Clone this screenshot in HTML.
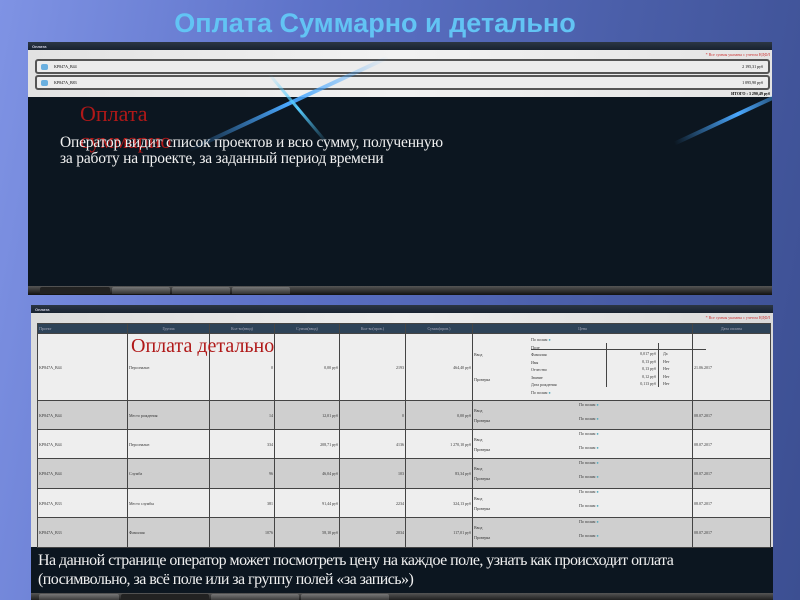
<!DOCTYPE html>
<html><head><meta charset="utf-8"><style>
*{margin:0;padding:0;box-sizing:border-box}
body{width:800px;height:600px;overflow:hidden;position:relative;background:linear-gradient(100deg,#7f93e4 0%,#5d72c8 35%,#4a5ea8 70%,#3c4f92 100%);font-family:"Liberation Serif",serif}
.a{position:absolute}
h1{position:absolute;left:0;width:750px;top:8px;text-align:center;font:bold 27px "Liberation Sans",sans-serif;color:#62c4f4;letter-spacing:0}
.tb{background:linear-gradient(#2b3644,#182230);color:#ccd;font:bold 4px "Liberation Sans";padding:2px 4px}
.tabs{background:linear-gradient(#555,#111);}
.tab{position:absolute;top:1px;height:7px;background:linear-gradient(#777,#333);border-radius:2px 2px 0 0}
table{border-collapse:collapse;font-size:4px;color:#333;font-family:"Liberation Serif",serif}
td,th{border:1px solid #444;padding:1px}
th{background:#2e4358;color:#aab;font-weight:normal;height:10px}
.pp{position:absolute;left:548px;font-size:4px;color:#333}
.pp span{color:#5ab}
</style></head><body>
<h1>Оплата Суммарно и детально</h1>

<div class="a" style="left:28px;top:42px;width:744px;height:253px;background:#0c1620;overflow:hidden">
 <div class="tb" style="height:8px">Оплата</div>
 <div class="a" style="left:0;top:8px;width:744px;height:47px;background:linear-gradient(90deg,#e2e2e2,#f2f2f2 50%,#e4e4e4)"></div>
 <div class="a" style="right:2px;top:10px;font-size:4px;color:#c33">* Все суммы указаны с учетом НДФЛ</div>
 <div class="a" style="left:7px;top:17px;width:735px;height:15px;border:2px solid #555;border-radius:3px;background:#ececec"><span class="a" style="left:4px;top:3px;width:7px;height:6px;background:#6ab0e0;border-radius:2px"></span><span class="a" style="left:17px;top:3px;font-size:4px">KP847A_B44</span><span class="a" style="right:5px;top:3px;font-size:4px">2 195,31 руб</span></div>
 <div class="a" style="left:7px;top:33px;width:735px;height:15px;border:2px solid #555;border-radius:3px;background:#ececec"><span class="a" style="left:4px;top:3px;width:7px;height:6px;background:#6ab0e0;border-radius:2px"></span><span class="a" style="left:17px;top:3px;font-size:4px">KP847A_B83</span><span class="a" style="right:5px;top:3px;font-size:4px">1 095,90 руб</span></div>
 <div class="a" style="right:2px;top:49px;font-size:4px;font-weight:bold">ИТОГО : 3 290,49 руб</div>
 <div class="a" style="left:150px;top:60px;width:220px;height:4px;background:linear-gradient(90deg,transparent,#4aa8ff,transparent);transform:rotate(-25deg)"></div>
 <div class="a" style="left:225px;top:65px;width:90px;height:3px;background:linear-gradient(90deg,transparent,#5cf,transparent);transform:rotate(50deg)"></div>
 <div class="a" style="left:640px;top:70px;width:140px;height:4px;background:linear-gradient(90deg,transparent,#4aa8ff,transparent);transform:rotate(-25deg)"></div>
 <div class="a" style="left:52px;top:58px;font-size:22px;color:#b01818;line-height:27px">Оплата<br>суммарно</div>
 <div class="a" style="left:32px;top:93px;font-size:15.5px;color:#f0f0f0;line-height:16px;letter-spacing:-0.2px">Оператор видит список проектов и всю сумму, полученную<br>за работу на проекте, за заданный период времени</div>
 <div class="a tabs" style="left:0;top:244px;width:744px;height:9px">
  <div class="tab" style="left:12px;width:70px;background:#222"></div><div class="tab" style="left:84px;width:58px"></div><div class="tab" style="left:144px;width:58px"></div><div class="tab" style="left:204px;width:58px"></div></div>
</div>

<div class="a" style="left:31px;top:305px;width:742px;height:295px;background:#0c1620;overflow:hidden">
 <div class="tb" style="height:8px">Оплата</div>
 <div class="a" style="left:0;top:8px;width:742px;height:234px;background:linear-gradient(90deg,#dcdcdc,#ededed 50%,#dadada)"></div>
 <div class="a" style="right:3px;top:10px;font-size:4px;color:#c33">* Все суммы указаны с учетом НДФЛ</div>
 <table class="a" style="left:6px;top:18px;width:734px;height:224px">
  <tr><th style="width:90px;text-align:left">Проект</th><th style="width:82px">Группа</th><th style="width:65px">Кол-во(ввод)</th><th style="width:65px">Сумма(ввод)</th><th style="width:66px">Кол-во(пров.)</th><th style="width:67px">Сумма(пров.)</th><th style="width:220px">Цена</th><th>Дата оплаты</th></tr>
  <tr style="height:67px;background:#eee"><td>KP847A_B44</td><td>Персональн</td><td align="right">0</td><td align="right">0,00 руб</td><td align="right">2193</td><td align="right">464,40 руб</td><td>Ввод<br><br><br><br><br>Проверка</td><td>21.06.2017</td></tr>
  <tr style="height:29px;background:#cfcfcf"><td>KP847A_B44</td><td>Место рождения</td><td align="right">14</td><td align="right">12,01 руб</td><td align="right">0</td><td align="right">0,00 руб</td><td>Ввод<br><br>Проверка</td><td>08.07.2017</td></tr>
  <tr style="height:29px;background:#eee"><td>KP847A_B44</td><td>Персональн</td><td align="right">334</td><td align="right">208,71 руб</td><td align="right">4136</td><td align="right">1 270,10 руб</td><td>Ввод<br><br>Проверка</td><td>08.07.2017</td></tr>
  <tr style="height:30px;background:#cfcfcf"><td>KP847A_B44</td><td>Служба</td><td align="right">96</td><td align="right">46,04 руб</td><td align="right">103</td><td align="right">83,34 руб</td><td>Ввод<br><br>Проверка</td><td>08.07.2017</td></tr>
  <tr style="height:29px;background:#eee"><td>KP847A_B33</td><td>Место службы</td><td align="right">381</td><td align="right">91,44 руб</td><td align="right">2234</td><td align="right">324,13 руб</td><td>Ввод<br><br>Проверка</td><td>08.07.2017</td></tr>
  <tr style="height:30px;background:#cfcfcf"><td>KP847A_B33</td><td>Фамилия</td><td align="right">1076</td><td align="right">58,10 руб</td><td align="right">2034</td><td align="right">117,01 руб</td><td>Ввод<br><br>Проверка</td><td>08.07.2017</td></tr>
 </table>
 <div class="a" style="left:500px;top:31px;width:150px;font-size:4px;line-height:7.5px;color:#333">По полям <span style="color:#5ab">●</span><br>Поле<br>Фамилия<br>Имя<br>Отчество<br>Звание<br>Дата рождения<br>По полям <span style="color:#5ab">●</span></div>
 <div class="a" style="left:500px;top:44px;width:175px;border-top:1px solid #444"></div>
 <div class="a" style="left:575px;top:38px;height:44px;border-left:1px solid #444"></div>
 <div class="a" style="left:627px;top:38px;height:44px;border-left:1px solid #444"></div>
 <div class="a" style="left:590px;top:45px;font-size:4px;line-height:7.5px;color:#333;text-align:right;width:35px">0,017 руб<br>0,13 руб<br>0,13 руб<br>0,12 руб<br>0,113 руб</div>
 <div class="a" style="left:632px;top:45px;font-size:4px;line-height:7.5px;color:#333">Да<br>Нет<br>Нет<br>Нет<br>Нет</div>
 <div class="pp" style="top:97px">По полям <span>●</span></div><div class="pp" style="top:111px">По полям <span>●</span></div>
 <div class="pp" style="top:126px">По полям <span>●</span></div><div class="pp" style="top:140px">По полям <span>●</span></div>
 <div class="pp" style="top:155px">По полям <span>●</span></div><div class="pp" style="top:169px">По полям <span>●</span></div>
 <div class="pp" style="top:184px">По полям <span>●</span></div><div class="pp" style="top:198px">По полям <span>●</span></div>
 <div class="pp" style="top:214px">По полям <span>●</span></div><div class="pp" style="top:228px">По полям <span>●</span></div>
 <div class="a" style="left:100px;top:30px;font-size:20px;color:#b01818">Оплата детально</div>
 <div class="a" style="left:7px;top:246px;font-size:16px;color:#f0f0f0;line-height:19px;letter-spacing:-0.55px">На данной странице оператор может посмотреть цену на каждое поле, узнать как происходит оплата<br>(посимвольно, за всё поле или за группу полей «за запись»)</div>
 <div class="a tabs" style="left:0;top:288px;width:742px;height:9px">
  <div class="tab" style="left:8px;width:80px"></div><div class="tab" style="left:90px;width:88px;background:#222"></div><div class="tab" style="left:180px;width:88px"></div><div class="tab" style="left:270px;width:88px"></div></div>
</div>
</body></html>
